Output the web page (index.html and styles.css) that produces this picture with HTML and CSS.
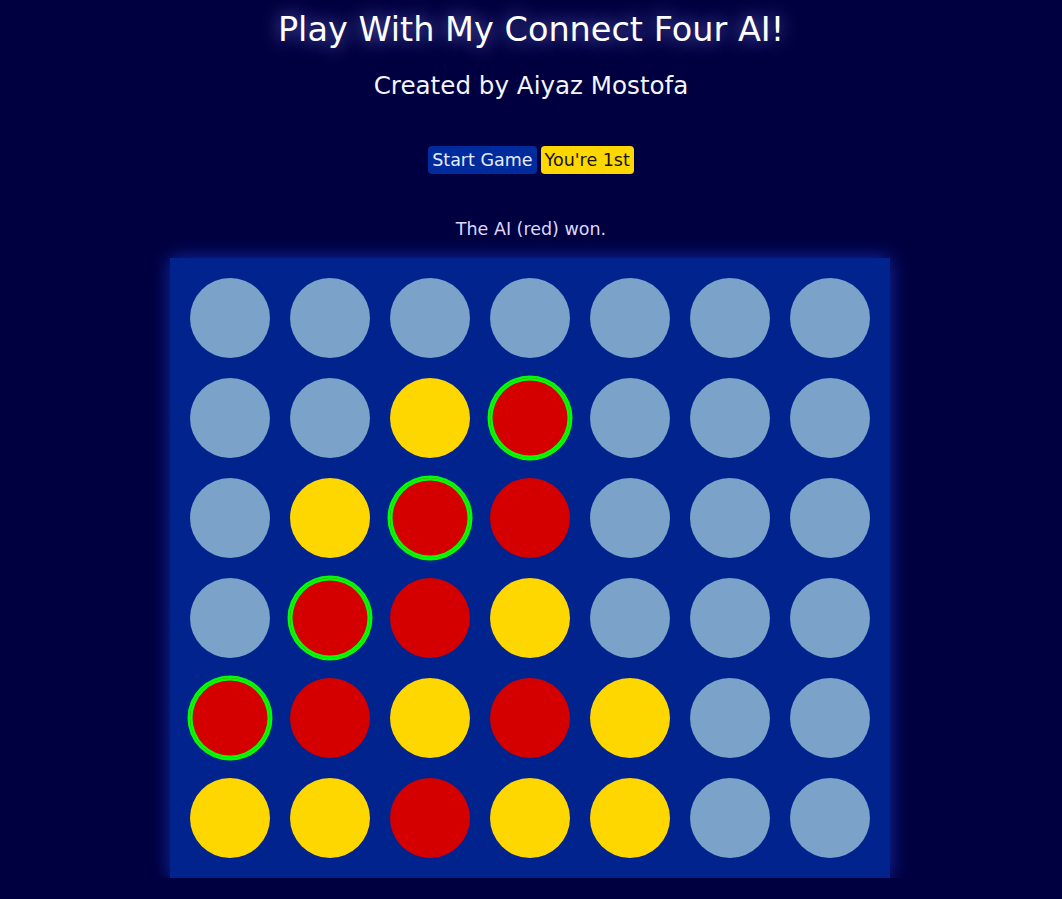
FILE: index.html
```html
<!DOCTYPE html>
<html>
<head>
<meta charset="utf-8">
<title>Connect Four AI</title>
<link rel="stylesheet" href="styles.css">
</head>
<body>
<main class="page">
  <h1 class="title">Play With My Connect Four AI!</h1>
  <h2 class="subtitle">Created by Aiyaz Mostofa</h2>
  <div class="controls">
    <button class="btn btn-start">Start Game</button>
    <button class="btn btn-turn">You're 1st</button>
  </div>
  <p class="status">The AI (red) won.</p>
  <div class="board">
    <div class="cell"></div><div class="cell"></div><div class="cell"></div><div class="cell"></div><div class="cell"></div><div class="cell"></div><div class="cell"></div>
    <div class="cell"></div><div class="cell"></div><div class="cell yellow"></div><div class="cell red win"></div><div class="cell"></div><div class="cell"></div><div class="cell"></div>
    <div class="cell"></div><div class="cell yellow"></div><div class="cell red win"></div><div class="cell red"></div><div class="cell"></div><div class="cell"></div><div class="cell"></div>
    <div class="cell"></div><div class="cell red win"></div><div class="cell red"></div><div class="cell yellow"></div><div class="cell"></div><div class="cell"></div><div class="cell"></div>
    <div class="cell red win"></div><div class="cell red"></div><div class="cell yellow"></div><div class="cell red"></div><div class="cell yellow"></div><div class="cell"></div><div class="cell"></div>
    <div class="cell yellow"></div><div class="cell yellow"></div><div class="cell red"></div><div class="cell yellow"></div><div class="cell yellow"></div><div class="cell"></div><div class="cell"></div>
  </div>
</main>
</body>
</html>
```
FILE: styles.css
```css
html, body {
  margin: 0;
  padding: 0;
  background: #000040;
}
.page {
  display: flex;
  flex-direction: column;
  align-items: center;
  font-family: "DejaVu Sans", sans-serif;
  color: #ffffff;
}
.title {
  margin: 11px 0 0;
  font-size: 33.5px;
  font-weight: normal;
  line-height: 38px;
  text-shadow: 0 0 18px rgba(150, 150, 255, 0.8);
}
.subtitle {
  margin: 23px 0 0;
  font-size: 24.6px;
  font-weight: normal;
  line-height: 28px;
  color: #f4f4ff;
}
.controls {
  display: flex;
  gap: 4px;
  margin-top: 46px;
}
.btn {
  font-family: "DejaVu Sans", sans-serif;
  font-size: 17.5px;
  line-height: 20px;
  padding: 4px 4px;
  border: none;
  border-radius: 4px;
}
.btn-start {
  background: #002b9c;
  color: #e6ecff;
}
.btn-turn {
  background: #ffd700;
  color: #141414;
}
.status {
  margin: 45px 0 0;
  font-size: 17.5px;
  line-height: 20px;
  color: #ddd8ff;
}
.board {
  margin-top: 19px;
  margin-right: 2px;
  display: grid;
  grid-template-columns: repeat(7, 80px);
  grid-auto-rows: 80px;
  gap: 20px;
  padding: 20px;
  background: #00238e;
  box-shadow: 0 0 18px rgba(40, 80, 255, 0.55);
}
.cell {
  border-radius: 50%;
  background: #7ba2c8;
}
.cell.red {
  background: #d40000;
}
.cell.yellow {
  background: #ffd700;
}
.cell.win {
  box-shadow: 0 0 0 2.5px #00ff00, inset 0 0 0 2.5px #00ff00;
}
```
